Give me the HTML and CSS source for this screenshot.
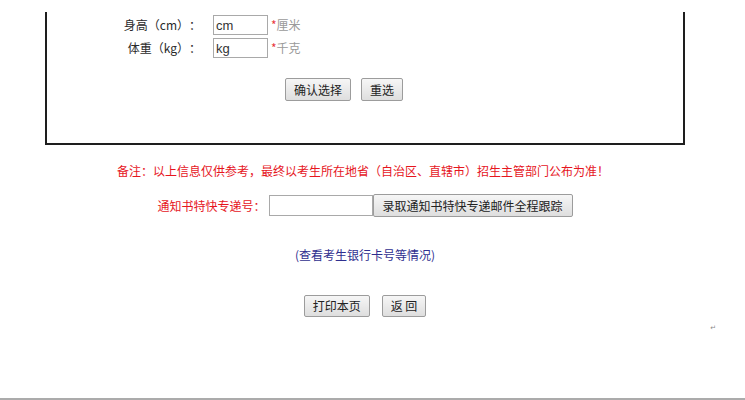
FILE: index.html
```html
<!DOCTYPE html>
<html lang="zh-CN">
<head>
<meta charset="utf-8">
<title>录取信息</title>
<link rel="stylesheet" href="styles.css">
</head>
<body>
<div class="page">
  <div class="content">
    <div class="box">
      <div class="form-grid">
        <label class="lbl">身高（cm）：</label>
        <input class="field" type="text" value="cm">
        <span class="unit"><span class="star">*</span>厘米</span>
        <label class="lbl">体重（kg）：</label>
        <input class="field" type="text" value="kg">
        <span class="unit"><span class="star">*</span>千克</span>
      </div>
      <div class="box-actions">
        <button class="btn">确认选择</button>
        <button class="btn">重选</button>
      </div>
    </div>
    <p class="note">备注：以上信息仅供参考，最终以考生所在地省（自治区、直辖市）招生主管部门公布为准！</p>
    <div class="track">
      <span class="track-label">通知书特快专递号：</span>
      <input class="track-input" type="text">
      <button class="btn btn-track">录取通知书特快专递邮件全程跟踪</button>
    </div>
    <p class="link-row"><a class="link" href="#">(查看考生银行卡号等情况)</a></p>
    <div class="actions">
      <button class="btn btn-small">打印本页</button>
      <button class="btn btn-small">返 回</button>
    </div>
  </div>
  <div class="mark-row"><span class="mark">↵</span></div>
</div>
</body>
</html>
```

FILE: styles.css
```css
html, body {
  margin: 0;
  padding: 0;
  background: #fff;
}

body {
  font-family: "Noto Sans CJK SC", "Liberation Sans", sans-serif;
  font-size: 12px;
  color: #333;
}

.page {
  width: 745px;
  height: 400px;
  box-sizing: border-box;
  padding-top: 12px;
  border-bottom: 2px solid #ababab;
}

.content {
  width: 730px;
}

.box {
  margin-left: 45px;
  width: 640px;
  height: 133px;
  box-sizing: border-box;
  border-left: 2px solid #1e1e1e;
  border-right: 2px solid #1e1e1e;
  border-bottom: 2px solid #1e1e1e;
  padding-top: 3px;
}

.form-grid {
  display: grid;
  grid-template-columns: 154px 12px 55px auto;
  row-gap: 3px;
  align-items: center;
}

.lbl {
  grid-column: 1;
  justify-self: end;
  white-space: nowrap;
  line-height: 20px;
  color: #2a2a2a;
  text-spacing-trim: space-all;
}

.field {
  grid-column: 3;
  width: 55px;
  height: 20px;
  box-sizing: border-box;
  border: 1px solid #a9a9a9;
  padding: 0 2px;
  margin: 0;
  font-family: "Liberation Sans", sans-serif;
  font-size: 13px;
  color: #333;
}

.unit {
  grid-column: 4;
  padding-left: 3px;
  color: #9a9a9a;
  line-height: 20px;
}

.star {
  color: #e8383d;
}

.box-actions {
  display: flex;
  gap: 10px;
  padding-left: 238px;
  margin-top: 20px;
}

.btn {
  font-family: "Noto Sans CJK SC", "Liberation Sans", sans-serif;
  font-size: 12px;
  color: #222;
  height: 23px;
  padding: 0 8px;
  margin: 0;
  border: 1px solid #9c9c9c;
  border-radius: 2px;
  background: linear-gradient(#f6f6f6, #dedede);
  line-height: 21px;
  white-space: nowrap;
}

.note {
  margin: 18px 0 0;
  text-align: center;
  color: #e6161e;
  line-height: 16px;
  padding-right: 4px;
}

.track {
  margin-top: 15px;
  display: flex;
  justify-content: center;
  align-items: center;
}

.track-label {
  color: #e6161e;
  padding-right: 3px;
  text-spacing-trim: space-all;
}

.track-input {
  width: 104px;
  height: 21px;
  box-sizing: border-box;
  border: 1px solid #a9a9a9;
  margin: 0;
  padding: 0 2px;
}

.btn-track {
  padding: 0 9px;
}

.link-row {
  margin: 30px 0 0;
  text-align: center;
  line-height: 16px;
}

.link {
  color: #2f2f8f;
  text-decoration: none;
}

.actions {
  margin-top: 32px;
  display: flex;
  justify-content: center;
  gap: 12px;
}

.btn-small {
  height: 22px;
  line-height: 20px;
}

.mark-row {
  margin-top: 4px;
  width: 730px;
  height: 8px;
  box-sizing: border-box;
  padding-right: 14px;
  text-align: right;
  line-height: 8px;
}

.mark {
  font-family: "DejaVu Sans", sans-serif;
  font-size: 7px;
  color: #8a8a8a;
}
```
